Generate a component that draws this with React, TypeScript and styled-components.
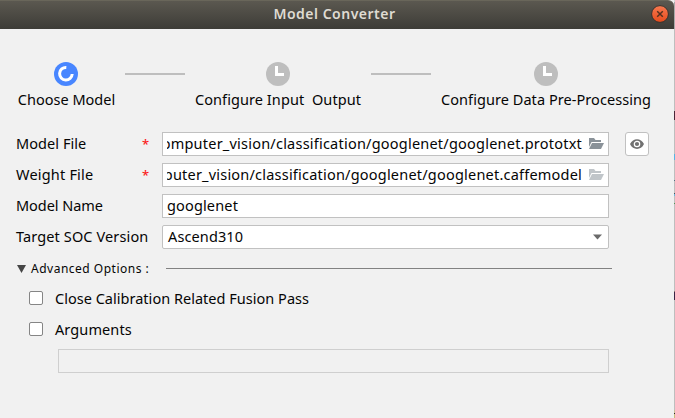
import React from "react";
import styled, { createGlobalStyle } from "styled-components";

const GlobalStyle = createGlobalStyle`
  * { box-sizing: border-box; }
  html, body { margin: 0; padding: 0; }
  body {
    width: 675px;
    height: 418px;
    overflow: hidden;
    background: #f1f1f1;
    font-family: "Noto Sans", "Open Sans", sans-serif;
    font-size: 14.5px;
    color: #050505;
  }
`;

const Screen = styled.div`
  display: grid;
  grid-template-columns: 674px 1px;
  height: 418px;
`;

const DesktopEdge = styled.div`
  background: linear-gradient(
    #d6d6d6 0 2px, #a9a9a9 2px 29px, #bebebe 29px 111px, #4b2638 111px 120px,
    #bebebe 120px 154px, #58b4e4 154px 160px, #bebebe 160px 180px, #536f82 180px 181px,
    #bebebe 181px 193px, #4b555a 193px 194px, #67b7df 194px 196px, #bebebe 196px 203px,
    #539455 203px 204px, #bebebe 204px 291px, #8f7272 291px 292px, #392545 292px 300px,
    #bebebe 300px 410px, #c6c099 410px 413px, #30282c 413px 414px, #c8bd7c 414px
  );
`;

const Dialog = styled.main`
  display: flex;
  flex-direction: column;
  background: #f1f1f1;
`;

const TitleBar = styled.header`
  display: grid;
  grid-template-columns: 32px 1fr 32px;
  align-items: center;
  height: 29px;
  border-top: 1px solid #69665a;
  border-top-right-radius: 6px;
  background: linear-gradient(#5b5850, #3d3c37);
`;

const Title = styled.h1`
  grid-column: 2;
  margin: 0;
  padding: 0 5px 2px 0;
  text-align: center;
  font-size: 14px;
  line-height: 26px;
  font-weight: 600;
  letter-spacing: 0.5px;
  color: #dfdbd2;
`;

const CloseButton = styled.button`
  display: flex;
  width: 18px;
  height: 18px;
  margin: 0 0 2px 9px;
  padding: 0;
  border: 0;
  background: none;
`;

const Steps = styled.nav`
  display: flex;
  gap: 10px;
  padding: 33px 0 0 18px;
  height: 103px;
`;

const Step = styled.div<{ $width: number }>`
  display: flex;
  flex-direction: column;
  align-items: center;
  gap: 3px;
  width: ${(p) => p.$width}px;
`;

const ActiveMark = styled.svg`
  width: 24px;
  height: 24px;
  margin-right: 1px;
`;

const Connector = styled.div`
  flex: 0 0 60px;
  height: 2px;
  margin-top: 11px;
  background: #bebebe;
`;

const Text = styled.span<{ $spacing?: number; $size?: number }>`
  white-space: pre;
  line-height: 20px;
  font-size: ${(p) => p.$size ?? 14.5}px;
  letter-spacing: ${(p) => p.$spacing ?? 0}px;
`;

const FormText = styled(Text)`
  margin-bottom: 2px;
`;

const Form = styled.section`
  display: grid;
  row-gap: 7px;
`;

const FormRow = styled.div`
  display: grid;
  grid-template-columns: 162px 447px 40px;
  height: 24px;
  align-items: center;
`;

const FieldLabel = styled.label`
  display: flex;
  justify-content: space-between;
  align-items: center;
  padding: 0 13px 0 16px;
`;

const Required = styled.span`
  color: #fb2020;
  font-size: 13px;
  font-weight: 500;
  line-height: 20px;
`;

const Field = styled.div<{ $select?: boolean }>`
  display: flex;
  align-items: center;
  justify-content: space-between;
  height: 24px;
  padding: ${(p) => (p.$select ? "0 3px 0 5px" : "0 4px")};
  border: 1px solid #c1c1c1;
  border-radius: ${(p) => (p.$select ? 2 : 0)}px;
  background: #fff;
`;

const PathText = styled.div`
  display: flex;
  justify-content: flex-end;
  width: 415px;
  overflow: hidden;
`;

const PreviewButton = styled.button`
  display: flex;
  align-items: center;
  justify-content: center;
  width: 24px;
  height: 24px;
  margin-left: 16px;
  padding: 0;
  border: 1px solid #c1c1c1;
  border-radius: 3px;
  background: #fff;
`;

const AdvancedHeader = styled.div`
  display: flex;
  align-items: center;
  height: 20px;
  margin-top: 9px;
  padding-left: 17px;
`;

const AdvancedLabel = styled.div`
  display: flex;
  width: 135px;
  margin-left: 5px;
  padding-top: 1px;
`;

const Arrow = styled.svg`
  width: 9px;
  height: 8px;
  margin-top: 2px;
`;

const Rule = styled.div`
  width: 446px;
  height: 1px;
  background: #828282;
`;

const Options = styled.div`
  padding-top: 4px;
`;

const CheckRow = styled.label`
  display: flex;
  align-items: center;
  gap: 12px;
  height: 31px;
  padding-left: 29px;
`;

const CheckBox = styled.span`
  width: 14px;
  height: 14px;
  border: 1px solid #858585;
  border-radius: 2px;
  background: #fff;
`;

const ArgumentsField = styled.div`
  width: 551px;
  height: 24px;
  margin: 5px 0 0 58px;
  border: 1px solid #cfcfcf;
`;

function ActiveIcon() {
  return (
    <ActiveMark viewBox="0 0 24 24">
      <circle cx="12" cy="12" r="12" fill="#4886ff" />
      <path d="M12.3 5.4A6.3 6.3 0 1 0 18.2 12" fill="none" stroke="#fff" strokeWidth="3" />
    </ActiveMark>
  );
}

function PendingIcon() {
  return (
    <svg width="24" height="24" viewBox="0 0 24 24">
      <circle cx="12" cy="12" r="12" fill="#bebebe" />
      <path d="M10.5 4V12.5H18" fill="none" stroke="#fff" strokeWidth="3" />
    </svg>
  );
}

function FolderIcon({ color }: { color: string }) {
  return (
    <svg width="16" height="12" viewBox="0 0 16 12">
      <path d="M1 0H6L7.5 2H13V4H3.5L1 9Z" fill={color} />
      <path d="M4 5H16L13 11H1Z" fill={color} />
    </svg>
  );
}

function EyeIcon() {
  return (
    <svg width="14" height="10" viewBox="0 0 14 10">
      <path d="M0 5C3-1.5 11-1.5 14 5C11 11.5 3 11.5 0 5Z" fill="#717171" />
      <circle cx="7" cy="5" r="2.7" fill="#717171" stroke="#fff" strokeWidth="1.2" />
    </svg>
  );
}

function CloseIcon() {
  return (
    <svg width="18" height="18" viewBox="0 0 18 18">
      <defs>
        <linearGradient id="close" x2="0" y2="1">
          <stop stopColor="#f77950" />
          <stop offset="1" stopColor="#e64b1c" />
        </linearGradient>
      </defs>
      <circle cx="9" cy="9" r="8.4" fill="url(#close)" stroke="#34332f" />
      <path d="M6.2 6.2L11.8 11.8M11.8 6.2L6.2 11.8" stroke="#55301f" strokeWidth="1.5" />
    </svg>
  );
}

const files = [
  { label: "Model File", spacing: 0.06, path: "computer_vision/classification/googlenet/googlenet.prototxt", pathSpacing: 0.22, color: "#8a9299", preview: true },
  { label: "Weight File", spacing: 0.2, path: "computer_vision/classification/googlenet/googlenet.caffemodel", pathSpacing: 0.21, color: "#c0c5c9", preview: false },
];

export default function App() {
  return (
    <>
      <GlobalStyle />
      <Screen>
        <Dialog>
          <TitleBar>
            <Title>Model Converter</Title>
            <CloseButton aria-label="Close"><CloseIcon /></CloseButton>
          </TitleBar>
          <Steps>
            <Step $width={97}><ActiveIcon /><Text $spacing={0}>Choose Model</Text></Step>
            <Connector />
            <Step $width={166}><PendingIcon /><Text $spacing={0.08}>Configure Input  Output</Text></Step>
            <Connector />
            <Step $width={210}><PendingIcon /><Text $spacing={0.06}>Configure Data Pre-Processing</Text></Step>
          </Steps>
          <Form>
            {files.map((f) => (
              <FormRow key={f.label}>
                <FieldLabel><FormText $spacing={f.spacing}>{f.label}</FormText><Required>*</Required></FieldLabel>
                <Field>
                  <PathText><FormText $spacing={f.pathSpacing}>{f.path}</FormText></PathText>
                  <FolderIcon color={f.color} />
                </Field>
                {f.preview && <PreviewButton aria-label="Preview"><EyeIcon /></PreviewButton>}
              </FormRow>
            ))}
            <FormRow>
              <FieldLabel><FormText $spacing={-0.06}>Model Name</FormText></FieldLabel>
              <Field><FormText $spacing={0.15}>googlenet</FormText></Field>
            </FormRow>
            <FormRow>
              <FieldLabel><FormText $spacing={0.12}>Target SOC Version</FormText></FieldLabel>
              <Field $select>
                <FormText $spacing={0.12}>Ascend310</FormText>
                <svg width="14" height="6" viewBox="0 0 14 6"><path d="M2 0.5H11L6.5 5.5Z" fill="#6a6a6a" /></svg>
              </Field>
            </FormRow>
          </Form>
          <AdvancedHeader>
            <Arrow viewBox="0 0 9 8"><path d="M0 0H9L4.5 8Z" fill="#464646" /></Arrow>
            <AdvancedLabel><Text $size={12} $spacing={0.5}>Advanced Options :</Text></AdvancedLabel>
            <Rule />
          </AdvancedHeader>
          <Options>
            <CheckRow><CheckBox /><Text $spacing={0.02}>Close Calibration Related Fusion Pass</Text></CheckRow>
            <CheckRow><CheckBox /><Text $spacing={0.1}>Arguments</Text></CheckRow>
          </Options>
          <ArgumentsField />
        </Dialog>
        <DesktopEdge />
      </Screen>
    </>
  );
}
